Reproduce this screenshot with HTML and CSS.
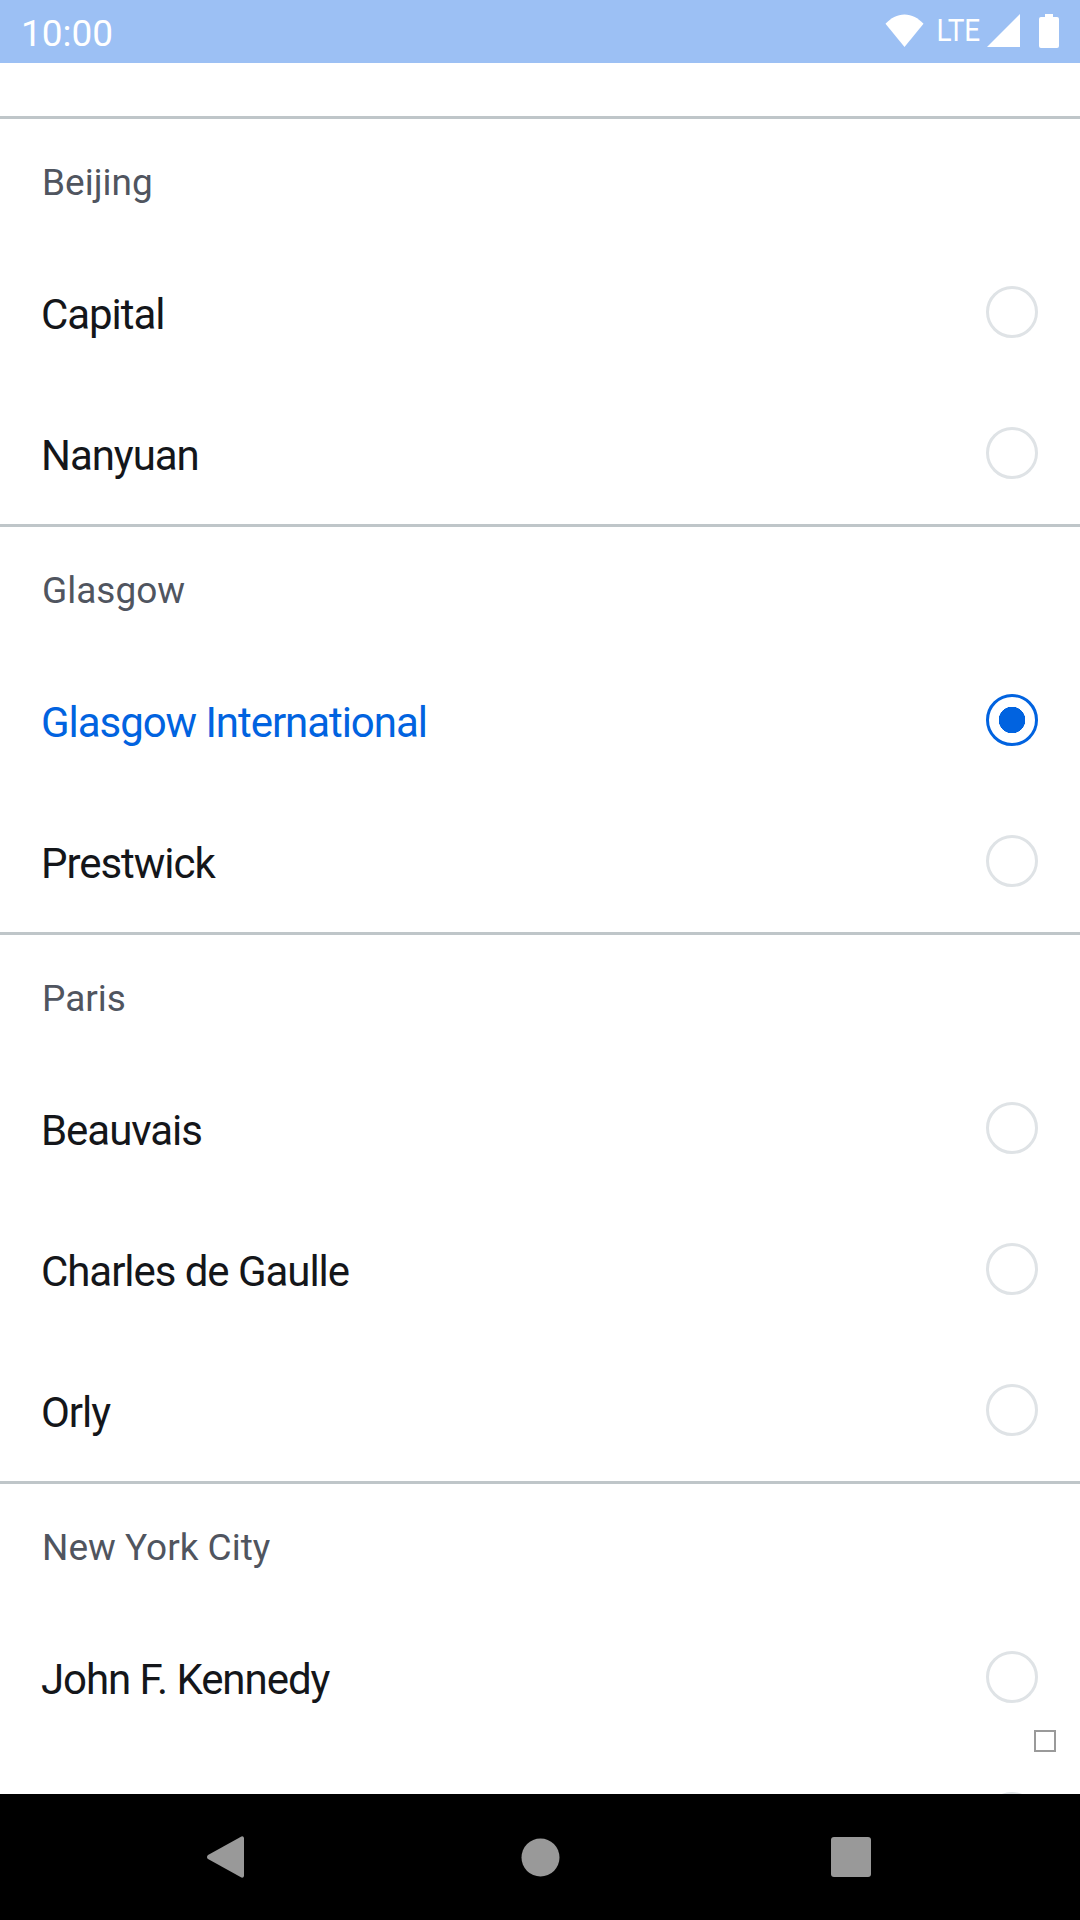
FILE: index.html
```html
<!DOCTYPE html>
<html lang="en">
<head>
<meta charset="utf-8">
<title>Airports</title>
<link rel="stylesheet" href="styles.css">
</head>
<body>
<div class="screen">
  <header class="status">
    <span class="time">10:00</span>
    <div class="status-icons">
      <svg class="wifi" width="39" height="33" viewBox="0 0 40 32" preserveAspectRatio="none"><path d="M0.500 9.500C6 4 12.500 0.500 20 0.500s14 3.500 19.500 9L20 32Z" fill="#fff"/></svg>
      <span class="lte">LTE</span>
      <svg class="signal" width="33" height="33" viewBox="0 0 33 33"><path d="M33 0V33H0Z" fill="#fff"/></svg>
      <svg class="battery" width="20" height="34" viewBox="0 0 20 34"><path d="M6 0h8v3h4a2 2 0 0 1 2 2v27a2 2 0 0 1-2 2H2a2 2 0 0 1-2-2V5a2 2 0 0 1 2-2h4Z" fill="#fff"/></svg>
    </div>
  </header>
  <main class="list">
    <div class="top-gap"></div>
    <section class="group">
      <h2 class="group-title">Beijing</h2>
      <div class="row"><span class="label">Capital</span><span class="radio"></span></div>
      <div class="row"><span class="label">Nanyuan</span><span class="radio"></span></div>
    </section>
    <section class="group">
      <h2 class="group-title">Glasgow</h2>
      <div class="row selected"><span class="label">Glasgow International</span><span class="radio"></span></div>
      <div class="row"><span class="label">Prestwick</span><span class="radio"></span></div>
    </section>
    <section class="group">
      <h2 class="group-title">Paris</h2>
      <div class="row"><span class="label">Beauvais</span><span class="radio"></span></div>
      <div class="row"><span class="label">Charles de Gaulle</span><span class="radio"></span></div>
      <div class="row"><span class="label">Orly</span><span class="radio"></span></div>
    </section>
    <section class="group">
      <h2 class="group-title">New York City</h2>
      <div class="row"><span class="label">John F. Kennedy</span><span class="radio"></span></div>
      <div class="row"><span class="label"></span><span class="radio"></span></div>
    </section>
  </main>
  <span class="marker"></span>
  <nav class="navbar">
    <svg class="nav-back" width="37" height="42" viewBox="0 0 36 42" preserveAspectRatio="none"><path d="M33.500 0.500a2 2 0 0 1 2.500 1.500V40a2 2 0 0 1-2.500 1.500L1 23a2.500 2.500 0 0 1 0-4Z" fill="#999"/></svg>
    <svg class="nav-home" width="39" height="39" viewBox="0 0 39 39"><circle cx="19.500" cy="19.500" r="19" fill="#999"/></svg>
    <svg class="nav-recent" width="40" height="40" viewBox="0 0 40 40"><rect width="40" height="40" rx="3" fill="#999"/></svg>
  </nav>
</div>
</body>
</html>
```
FILE: styles.css
```css
* { box-sizing: border-box; }
html, body { margin: 0; padding: 0; }
body { background: #fff; font-family: Roboto, "Noto Sans", sans-serif; }
.screen { position: relative; width: 1080px; height: 1920px; overflow: hidden; display: flex; flex-direction: column; }
.status { flex: none; height: 63px; background: #9cc0f4; display: flex; align-items: center; justify-content: space-between; padding: 0 21px 2px; color: #fff; }
.time { font-size: 37px; line-height: 63px; margin-top: 6px; }
.status-icons { display: flex; align-items: center; }
.wifi { margin-right: 10px; }
.lte { font-size: 31px; margin-right: 4px; transform: scaleX(.9); }
.signal { margin-right: 19px; }
.list { flex: 1; min-height: 0; overflow: hidden; }
.top-gap { height: 53px; }
.group { border-top: 3px solid #bfc6c9; }
.group-title { margin: 0; height: 123px; padding: 0 42px; font-size: 37px; line-height: 128px; font-weight: 400; color: #50555f; }
.row { height: 141px; display: flex; align-items: center; justify-content: space-between; padding: 0 42px 0 41px; font-size: 42px; color: #14161a; letter-spacing: -1.05px; }
.label { margin-top: 4px; }
.row .radio { width: 52px; height: 52px; border: 3px solid #dfe3e6; border-radius: 50%; margin-top: -1px; }
.row.selected { color: #0163e0; }
.row.selected .radio { border-color: #0163e0; background: radial-gradient(circle, #0163e0 0 13px, #fff 13.500px); }
.marker { position: absolute; left: 1034px; top: 1730px; width: 22px; height: 22px; border: 2px solid #9a9a9a; background: #fff; }
.navbar { flex: none; height: 126px; background: #000; display: flex; align-items: center; padding: 0 0 0 207px; }
.nav-home { margin-left: 277px; }
.nav-recent { margin-left: 271px; }
```
